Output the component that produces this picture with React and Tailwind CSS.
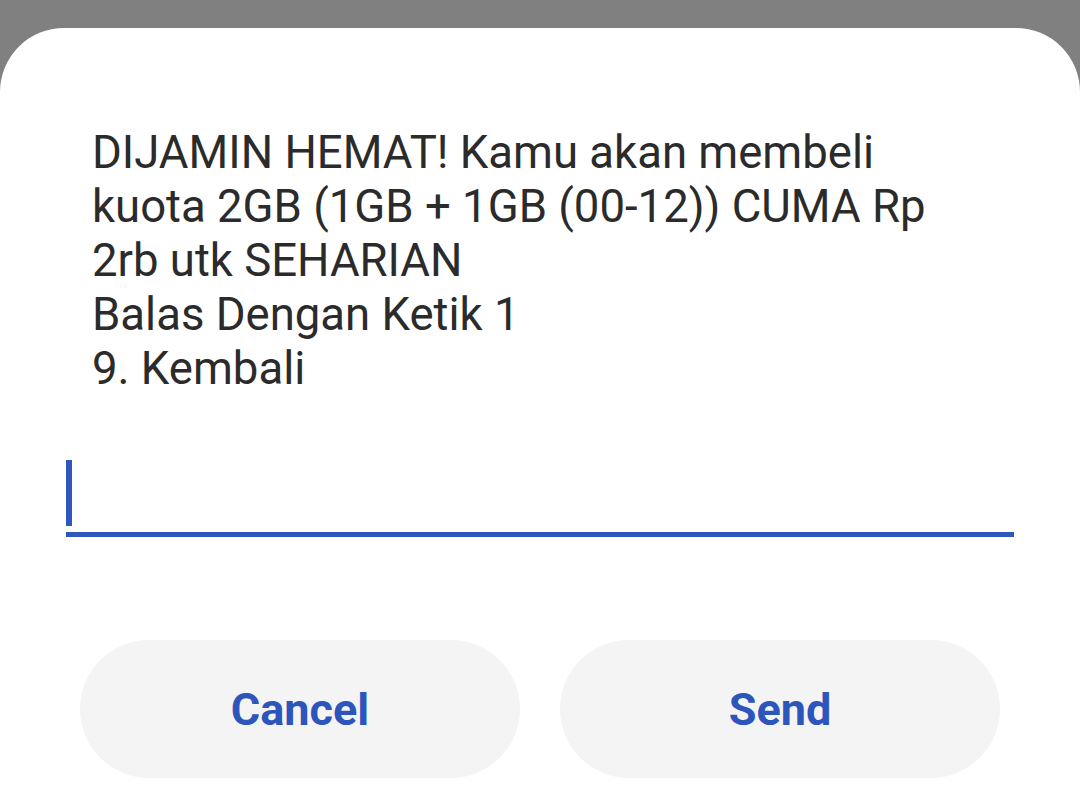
export default function App() {
  return (
    <div className="h-[804px] w-[1080px] overflow-hidden bg-[#808080] pt-[28px]" style={{ fontFamily: 'Roboto, "Noto Sans", sans-serif' }}>
      <div className="flex h-full flex-col rounded-t-[64px] bg-white">
        <div className="pl-[92px] pr-[40px] pt-[98px] text-[45.5px] leading-[54px] text-[#2b2b2b]">
          <div>DIJAMIN HEMAT! Kamu akan membeli</div>
          <div>kuota 2GB (1GB + 1GB (00-12)) CUMA Rp</div>
          <div>2rb utk SEHARIAN</div>
          <div>Balas Dengan Ketik 1</div>
          <div>9. Kembali</div>
        </div>
        <div className="mx-[66px] mt-[64px] flex h-[77px] flex-col justify-end">
          <div className="flex h-[72px] items-start pb-[6px]">
            <div className="h-[66px] w-[6px] bg-[#2f58bf]"></div>
          </div>
          <div className="h-[5px] w-full bg-[#2f58bf]"></div>
        </div>
        <div className="mt-[103px] flex gap-[40px] px-[80px]">
          <button className="flex h-[138px] flex-1 items-center justify-center rounded-full bg-[#f4f4f4] pt-[2px] text-[45px] font-bold text-[#2d56bd]">Cancel</button>
          <button className="flex h-[138px] flex-1 items-center justify-center rounded-full bg-[#f4f4f4] pt-[2px] text-[45px] font-bold text-[#2d56bd]">Send</button>
        </div>
      </div>
    </div>
  );
}
